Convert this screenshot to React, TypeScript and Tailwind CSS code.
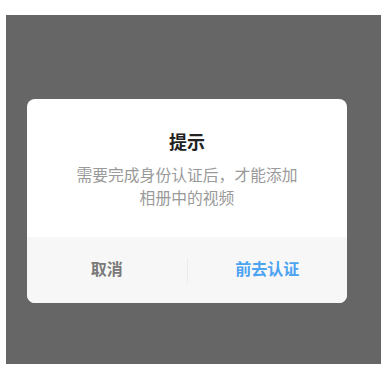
export default function App() {
	return (
		<div className="w-[388px] h-[372px] bg-white pt-[15px] pl-[6px] font-['Liberation_Serif','Noto_Sans_CJK_SC',serif]">
			{/* 遮罩层 */}
			<div className="w-[375px] h-[349px] bg-[#666666] pt-[84px] pl-[21px]">
				{/* 弹窗 */}
				<div className="w-[320px] rounded-[8px] bg-white overflow-hidden">
					<div className="pt-[31px] pb-[27px] text-center">
						<h2 className="text-[18px] leading-[26px] font-bold text-[#222222]">提示</h2>
						<p className="mt-[8px] text-[15.8px] leading-[23px] text-[#9a9a9a]">
							需要完成身份认证后，才能添加
							<br />
							相册中的视频
						</p>
					</div>
					<div className="flex items-center h-[66px] bg-[#f7f7f7]">
						<button className="flex-1 text-center text-[16px] font-bold text-[#7a7a7a]">取消</button>
						<div className="w-px h-[25px] bg-[#ebebeb]" />
						<button className="flex-1 text-center text-[16px] font-bold text-[#4ba3f2]">前去认证</button>
					</div>
				</div>
			</div>
		</div>
	);
}
